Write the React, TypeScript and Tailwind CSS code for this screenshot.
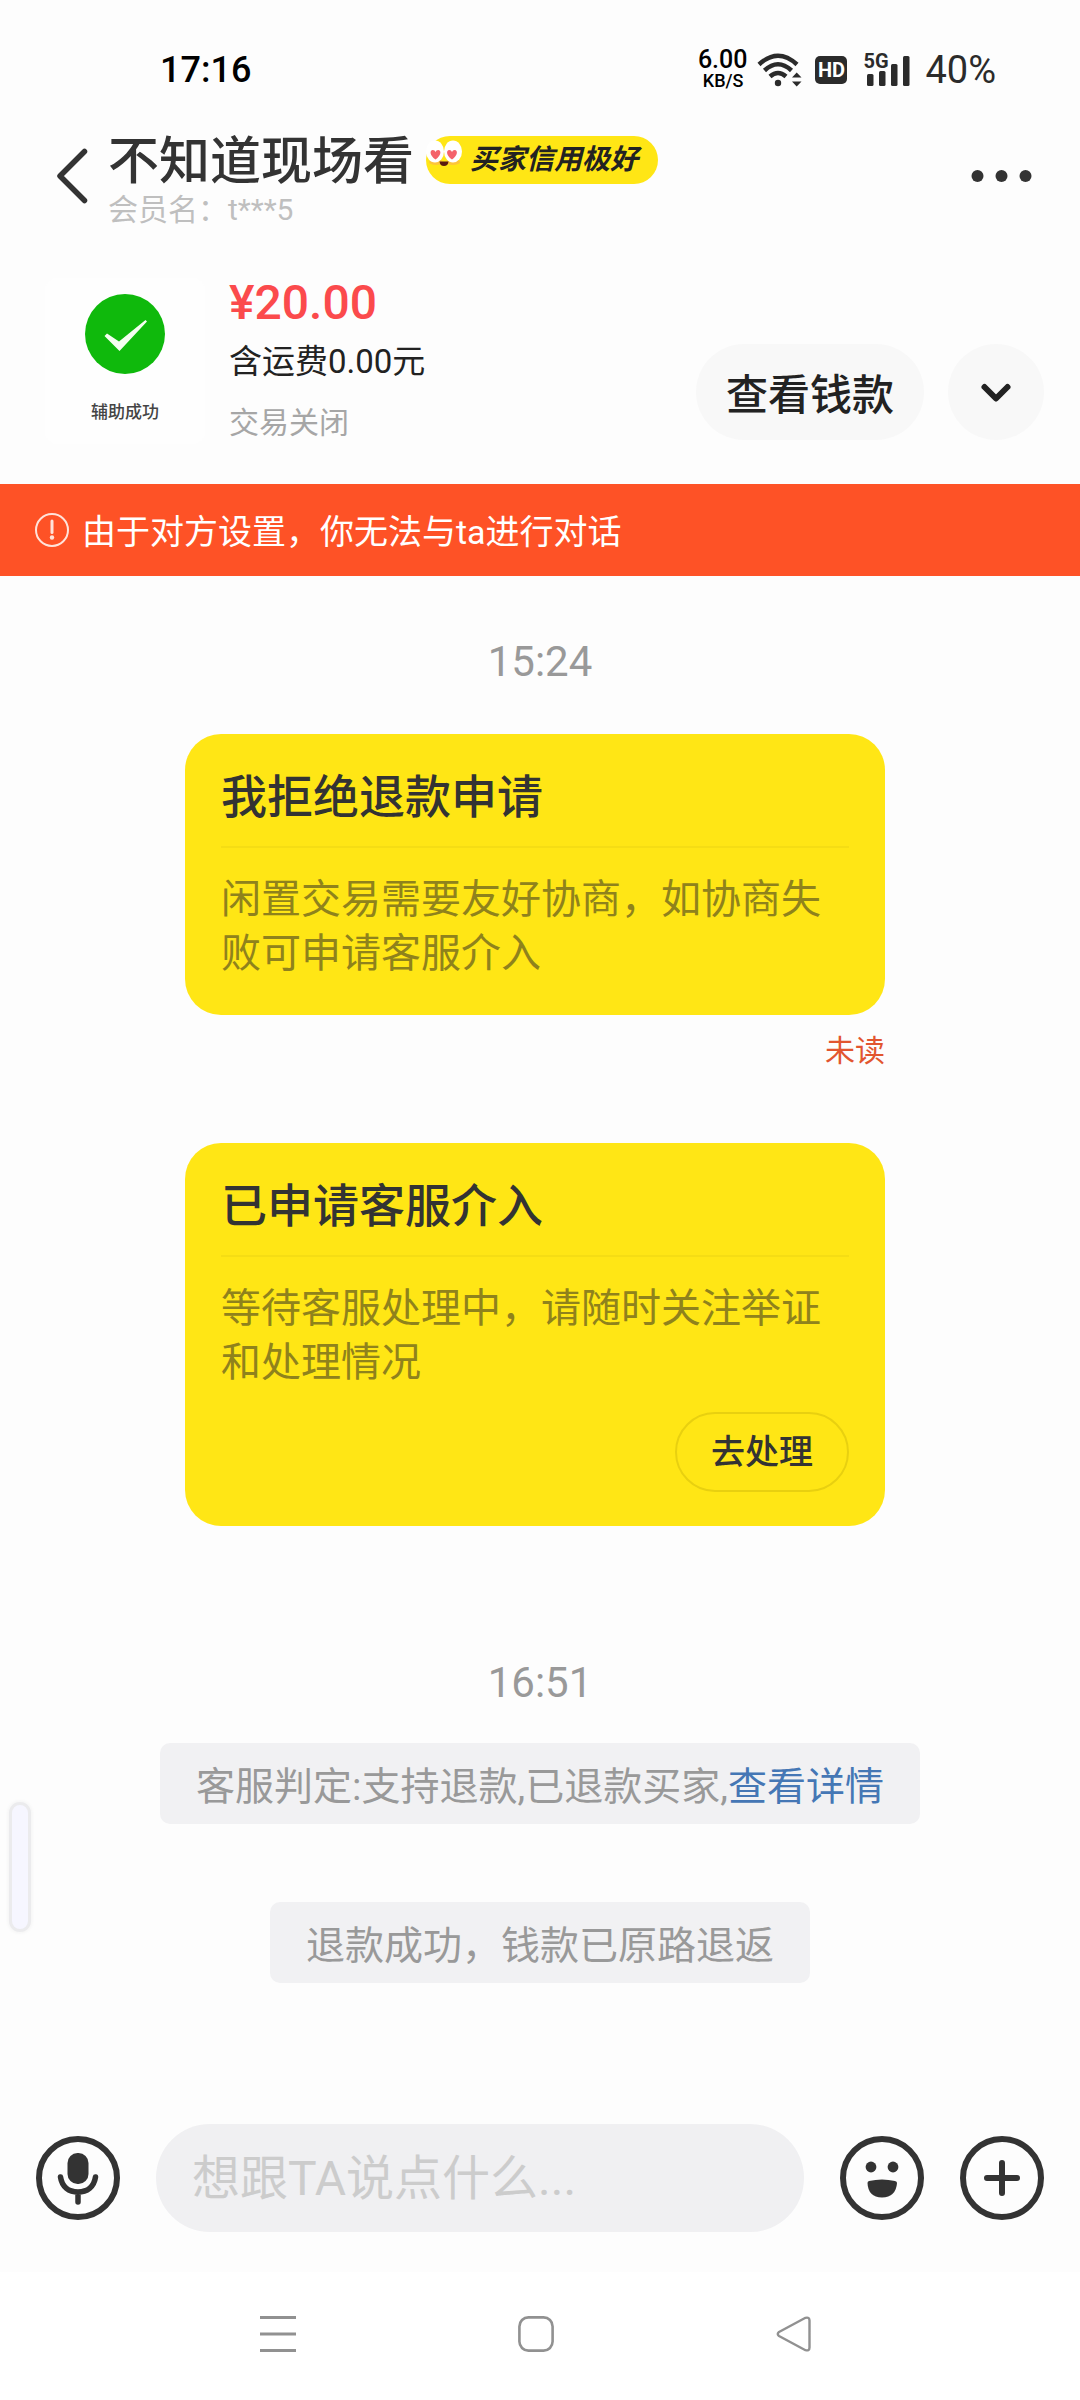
import type { ReactNode } from 'react'

function StatusBar() {
  return (
    <div className="flex h-[92px] items-center justify-between pt-12 pr-[84px] pl-[160px] text-[#2b2b2b]">
      <span className="text-[36px] leading-[44px] font-medium text-black">17:16</span>
      <div className="flex items-center">
        <div className="flex flex-col items-end font-medium text-black">
          <span className="text-[25px] leading-[22px]">6.00</span>
          <span className="pr-1 text-[18px] leading-[20px]">KB/S</span>
        </div>
        <svg className="ml-[10px] h-9 w-[46px]" viewBox="0 0 46 36" fill="none">
          <g stroke="currentColor" strokeWidth="4.5">
            <path d="M2 12.500 Q21 -5 40 12.500" />
            <path d="M7.500 18.500 Q21 6 34.500 18.500" />
            <path d="M13 24.500 Q21 17.500 29 24.500" />
          </g>
          <circle cx="21" cy="31" r="3.200" fill="currentColor" />
          <path d="M35 25.500 L39.700 20.500 L44.500 25.500 Z M35 29.500 L39.700 34.500 L44.500 29.500 Z" fill="currentColor" />
        </svg>
        <span className="ml-3 flex h-7 w-8 items-center justify-center rounded-[5px] bg-[#2b2b2b] text-[20px] leading-7 font-bold text-white">
          HD
        </span>
        <div className="relative ml-4 h-9 w-[48px]">
          <span className="absolute top-0 left-0 text-[20px] leading-[18px] font-bold">5G</span>
          <svg className="h-9 w-[48px]" viewBox="0 0 48 36" fill="currentColor">
            <rect x="4" y="22" width="6.500" height="12" rx="1.500" />
            <rect x="16" y="19" width="6.500" height="15" rx="1.500" />
            <rect x="28" y="12" width="6.500" height="22" rx="1.500" />
            <rect x="40" y="4" width="6.500" height="30" rx="1.500" />
          </svg>
        </div>
        <span className="ml-[14px] text-[38px] leading-[44px]">40%</span>
      </div>
    </div>
  )
}

function CreditBadge() {
  return (
    <span className="relative flex h-12 items-center rounded-full bg-[#ffe615] pr-5 pl-11 text-[28px] leading-[48px] font-bold text-[#222] italic">
      <svg className="absolute top-1 left-0 h-8 w-9" viewBox="0 0 36 32">
        <ellipse cx="10" cy="22" rx="7" ry="3" fill="#fdc53a" />
        <ellipse cx="27" cy="22" rx="7" ry="3" fill="#fdc53a" />
        <ellipse cx="9" cy="11.500" rx="9" ry="11" fill="#fff" />
        <ellipse cx="27" cy="11.500" rx="9" ry="11" fill="#fff" />
        <path d="M9.500 19.500 C3.500 15.500 3.500 10 6.800 10 Q8.900 10 9.500 12 Q10.100 10 12.200 10 C15.500 10 15.500 15.500 9.500 19.500 Z" fill="#f4626a" />
        <path d="M26 19.500 C20 15.500 20 10 23.300 10 Q25.400 10 26 12 Q26.600 10 28.700 10 C32 10 32 15.500 26 19.500 Z" fill="#f4626a" />
        <path d="M13.500 21.500 H22.500 Q22 26 18 26 Q14 26 13.500 21.500 Z" fill="#5a1a10" />
      </svg>
      买家信用极好
    </span>
  )
}

function Header() {
  return (
    <header className="flex items-start pt-[38px] pr-9 pl-[54px]">
      <button type="button" aria-label="返回" className="flex h-[92px] w-[54px] shrink-0 items-center text-[#333]">
        <svg className="h-[60px] w-9" viewBox="0 0 36 60" fill="none">
          <path d="M30.500 5.500 L6 30 L30.500 54.500" stroke="currentColor" strokeWidth="5.500" strokeLinecap="round" strokeLinejoin="round" />
        </svg>
      </button>
      <div className="flex-1">
        <div className="flex items-center gap-3">
          <h1 className="pt-1 text-[51px] leading-[56px] font-medium text-[#333]">不知道现场看</h1>
          <CreditBadge />
        </div>
        <p className="text-[30px] leading-10 text-[#bfbfbf]">会员名：t***5</p>
      </div>
      <button type="button" aria-label="更多" className="flex h-[92px] items-center pr-3 text-[#333]">
        <svg className="h-3 w-[61px]" viewBox="0 0 61 12" fill="currentColor">
          <circle cx="6.500" cy="6" r="6" />
          <circle cx="30.500" cy="6" r="6" />
          <circle cx="54.500" cy="6" r="6" />
        </svg>
      </button>
    </header>
  )
}

function OrderInfo() {
  return (
    <section className="flex items-end pt-11 pr-9 pb-[31px] pl-[45px]">
      <div className="mb-[9px] flex h-[166px] w-[160px] shrink-0 flex-col items-center rounded-xl bg-[#fefefe] pt-4">
        <svg className="h-20 w-20" viewBox="0 0 80 80">
          <circle cx="40" cy="40" r="40" fill="#0fb90c" />
          <path d="M19.500 42 L22 39.500 L34 47.500 L60.500 26 L62 27.500 L34.500 57 Z" fill="#f4fff0" />
        </svg>
        <span className="mt-[26px] text-[17px] leading-6 font-medium text-[#444]">辅助成功</span>
      </div>
      <div className="flex-1 pl-6">
        <p className="text-[48px] leading-[58px] font-medium text-[#fb4a4c]">¥20.00</p>
        <p className="text-[33px] leading-[60px] text-[#222]">含运费0.00元</p>
        <p className="text-[30px] leading-[61px] text-[#a6a6a6]">交易关闭</p>
      </div>
      <div className="mb-[13px] flex gap-6">
        <button type="button" className="h-24 rounded-full bg-[#f8f8f8] px-[30px] pt-2 text-[42px] leading-[48px] font-medium text-[#222]">
          查看钱款
        </button>
        <button type="button" aria-label="展开" className="flex h-24 w-24 items-center justify-center rounded-full bg-[#f8f8f8] text-[#222]">
          <svg className="h-6 w-9" viewBox="0 0 36 24" fill="none">
            <path d="M6.500 7 L18 18.500 L29.500 7" stroke="currentColor" strokeWidth="6" strokeLinecap="round" strokeLinejoin="round" />
          </svg>
        </button>
      </div>
    </section>
  )
}

function Notice() {
  return (
    <div className="flex h-[92px] items-center gap-3 bg-[#fe5226] px-[34px] text-white">
      <svg className="h-9 w-9" viewBox="0 0 36 36" fill="none">
        <circle cx="18" cy="18" r="16" stroke="#ffe3da" strokeWidth="2" />
        <path d="M18 9 V20.500" stroke="#ffe3da" strokeWidth="3" strokeLinecap="round" />
        <circle cx="18" cy="25.500" r="2.200" fill="#ffe3da" />
      </svg>
      <span className="pt-1 text-[34px] leading-[48px]">由于对方设置，你无法与ta进行对话</span>
    </div>
  )
}

function Time({ children }: { children: ReactNode }) {
  return <p className="text-center text-[42px] leading-[48px] text-[#999]">{children}</p>
}

function Card({ title, text, action }: { title: string; text: string; action?: string }) {
  return (
    <article className="rounded-[36px] bg-[#ffe615] px-9 pt-[34px] pb-[34px]">
      <h2 className="border-b-2 border-[#f5dd14] pb-5 text-[46px] leading-[58px] font-medium text-[#333]">{title}</h2>
      <p className="mt-[25px] text-[40px] leading-[54px] text-[#8f821c]">{text}</p>
      {action && (
        <div className="mt-[22px] flex justify-end">
          <button type="button" className="h-20 rounded-full border-2 border-[#e8d010] px-[34px] text-[34px] leading-[48px] font-medium text-[#333]">
            {action}
          </button>
        </div>
      )}
    </article>
  )
}

function Tip({ children }: { children: ReactNode }) {
  return (
    <p className="self-center rounded-[10px] bg-[#f1f1f3] px-9 pt-5 pb-3 text-[39px] leading-[49px] text-[#999]">{children}</p>
  )
}

function InputBar() {
  return (
    <form className="flex items-center gap-9 px-9 pb-10 text-[#333]">
      <button type="button" aria-label="语音" className="shrink-0">
        <svg className="h-[84px] w-[84px]" viewBox="0 0 84 84" fill="none" stroke="currentColor">
          <circle cx="42" cy="42" r="39" strokeWidth="6" />
          <rect x="31.500" y="17" width="21" height="31" rx="10" fill="currentColor" stroke="none" />
          <path d="M24.500 41 C26 51 33 56 42 56 C51 56 58 51 59.500 41 M42 56 V66" strokeWidth="5.500" strokeLinecap="round" />
        </svg>
      </button>
      <input
        type="text"
        aria-label="消息"
        placeholder="想跟TA说点什么..."
        className="h-[108px] min-w-0 flex-1 rounded-full bg-[#f0f0f2] px-9 text-[48px] placeholder:text-[#ccc]"
      />
      <button type="button" aria-label="表情" className="shrink-0">
        <svg className="h-[84px] w-[84px]" viewBox="0 0 84 84" fill="currentColor">
          <circle cx="42" cy="42" r="39" fill="none" stroke="currentColor" strokeWidth="6" />
          <circle cx="31" cy="31" r="5.400" />
          <circle cx="53" cy="31" r="5.400" />
          <path d="M29 45 Q42 42 55 45 Q57 45.500 57 47 Q56 61 42 61.500 Q28 61 27.500 47 Q27.500 45.500 29 45 Z" />
        </svg>
      </button>
      <button type="button" aria-label="添加" className="shrink-0">
        <svg className="h-[84px] w-[84px]" viewBox="0 0 84 84" fill="none" stroke="currentColor" strokeWidth="6">
          <circle cx="42" cy="42" r="39" />
          <path d="M42 27 V57 M27 42 H57" strokeLinecap="round" />
        </svg>
      </button>
    </form>
  )
}

function SystemNav() {
  return (
    <nav className="flex h-32 items-center justify-center gap-[222px] bg-white pr-2 pb-1 text-[#919191]">
      <button type="button" aria-label="最近任务">
        <svg className="h-9 w-9" viewBox="0 0 36 36" stroke="currentColor" strokeWidth="3">
          <path d="M0 1.500 H36 M0 18 H36 M0 34.500 H36" />
        </svg>
      </button>
      <button type="button" aria-label="主屏幕">
        <svg className="h-9 w-9" viewBox="0 0 36 36" fill="none" stroke="currentColor" strokeWidth="2.600">
          <rect x="1.400" y="1.400" width="33.200" height="33.200" rx="9" />
        </svg>
      </button>
      <button type="button" aria-label="后退">
        <svg className="h-9 w-9" viewBox="0 0 36 36" fill="none" stroke="currentColor" strokeWidth="2.400" strokeLinejoin="round">
          <path d="M3 16 L29.500 1.800 Q33.500 0.800 33.500 4.500 V31.500 Q33.500 35.200 29.500 34.200 L3 20 Q0.500 18 3 16 Z" />
        </svg>
      </button>
    </nav>
  )
}

export default function App() {
  return (
    <div className="relative flex min-h-screen flex-col bg-[#fdfdfd] font-[Roboto,'Noto_Sans_CJK_SC',sans-serif]">
      <StatusBar />
      <Header />
      <OrderInfo />
      <Notice />
      <main className="flex flex-1 flex-col pt-[62px]">
        <Time>15:24</Time>
        <div className="mt-12 mr-[195px] ml-[185px] flex flex-col">
          <Card title="我拒绝退款申请" text="闲置交易需要友好协商，如协商失败可申请客服介入" />
          <span className="mt-4 mb-[72px] text-right text-[30px] leading-10 text-[#e2552f]">未读</span>
          <Card title="已申请客服介入" text="等待客服处理中，请随时关注举证和处理情况" action="去处理" />
        </div>
        <div className="mt-[133px] flex flex-col">
          <Time>16:51</Time>
          <div className="mt-9 flex flex-col gap-[78px]">
            <Tip>
              客服判定:支持退款,已退款买家,
              <a href="#detail" className="text-[#4577b5]">
                查看详情
              </a>
            </Tip>
            <Tip>退款成功，钱款已原路退返</Tip>
          </div>
        </div>
      </main>
      <InputBar />
      <SystemNav />
      {/* edge handle floating over the chat */}
      <div className="absolute top-[1802px] left-[9px] h-[130px] w-[22px] rounded-full border-3 border-[#ebebed] bg-[#f6f6ff] shadow-[0_0_4px_#eee]" />
    </div>
  )
}
